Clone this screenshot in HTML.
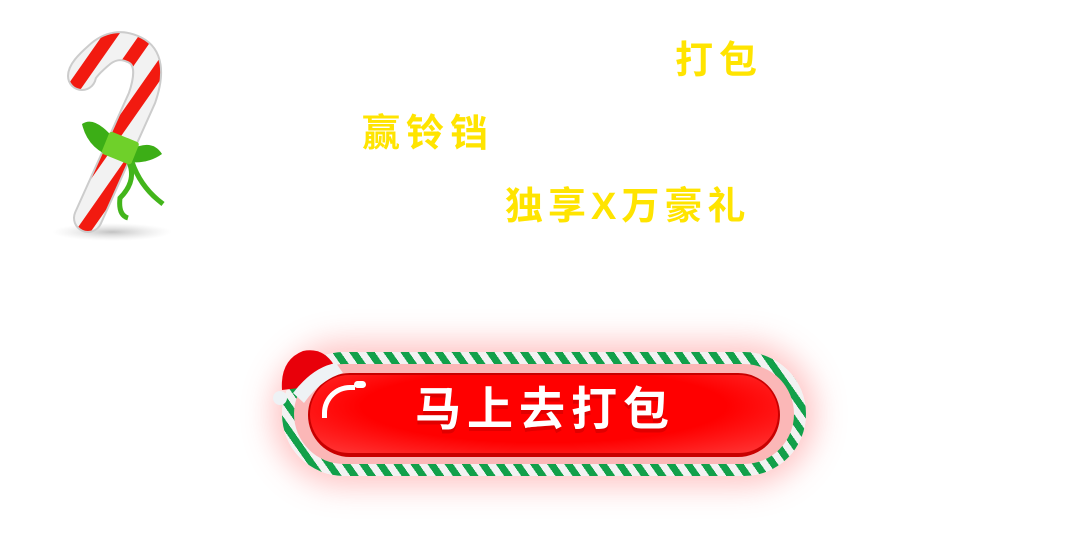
<!DOCTYPE html>
<html><head><meta charset="utf-8"><style>
body{margin:0;width:1088px;height:536px;background:#fff;position:relative;overflow:hidden;font-family:"Liberation Sans","Noto Sans CJK SC",sans-serif}
.t{position:absolute;color:#ffe400;font-weight:bold;font-size:38px;letter-spacing:6px;line-height:1;white-space:nowrap}
</style></head><body>
<div class="t" style="left:675px;top:42px">打包</div>
<div class="t" style="left:362px;top:115px">赢铃铛</div>
<div class="t" style="left:505px;top:188px;letter-spacing:5px">独享X万豪礼</div>

<svg style="position:absolute;left:40px;top:20px" width="150" height="230" viewBox="0 0 150 230">
<defs>
<pattern id="cs" width="30" height="30" patternUnits="userSpaceOnUse" patternTransform="rotate(35)"><rect width="30" height="30" fill="#f2f2f2"/><rect width="13" height="30" fill="#f21a10"/></pattern>
<radialGradient id="sh"><stop offset="0" stop-color="#999" stop-opacity=".6"/><stop offset="1" stop-color="#ccc" stop-opacity="0"/></radialGradient>
</defs>
<ellipse cx="72" cy="212" rx="60" ry="9" fill="url(#sh)"/>
<path d="M48 198 L102 78 Q115 40 95 30 Q75 20 58 36 Q42 50 42 56" fill="none" stroke="#ccc" stroke-width="30" stroke-linecap="round"/>
<path d="M48 198 L102 78 Q115 40 95 30 Q75 20 58 36 Q42 50 42 56" fill="none" stroke="url(#cs)" stroke-width="26" stroke-linecap="round"/>
<path d="M75 120 Q55 95 42 104 Q48 130 75 138Z" fill="#3cae16"/>
<path d="M90 130 Q112 118 122 134 Q108 144 90 142Z" fill="#3cae16"/>
<path d="M88 140 Q98 160 80 178 Q78 195 88 198" fill="none" stroke="#43b51b" stroke-width="5"/>
<path d="M92 142 Q100 165 118 180 L123 184" fill="none" stroke="#43b51b" stroke-width="5"/>
<rect x="64" y="116" width="32" height="24" rx="3" fill="#6fd02a" transform="rotate(22 80 129)"/>
</svg>

<div style="position:absolute;left:282px;top:352px;width:524px;height:124px;border-radius:62px;box-shadow:0 0 30px 10px rgba(255,90,90,.35);background:repeating-linear-gradient(55deg,#12a04a 0 7px,#f2f2f2 7px 14px)"></div>
<div style="position:absolute;left:294px;top:364px;width:500px;height:100px;border-radius:50px;background:#fbb7b7"></div>
<div style="position:absolute;left:308px;top:373px;width:472px;height:84px;border-radius:42px;background:#c80000"></div>
<div style="position:absolute;left:310px;top:375px;width:468px;height:78px;border-radius:39px;background:radial-gradient(ellipse at 50% 40%,#ff0000 55%,#ff3a3a 100%)"></div>
<div style="position:absolute;left:322px;top:385px;width:28px;height:28px;border-top:5px solid #fff;border-left:5px solid #fff;border-radius:28px 0 0 0"></div>
<div style="position:absolute;left:354px;top:381px;width:12px;height:7px;background:#fff;border-radius:4px"></div>
<div style="position:absolute;left:415px;top:386px;font-size:46px;font-weight:bold;color:#fff;letter-spacing:6px;line-height:1;text-shadow:0 4px 0 #e00000">马上去打包</div>

<svg style="position:absolute;left:268px;top:345px" width="80" height="70" viewBox="0 0 80 70">
<path d="M14 45 Q12 15 35 6 Q55 2 66 20 L40 42Z" fill="#e8000a"/>
<path d="M25 48 Q45 22 68 18 L75 28 Q52 35 36 58Z" fill="#eef2f5"/>
<circle cx="12" cy="53" r="7" fill="#eef2f5"/>
</svg>
</body></html>
